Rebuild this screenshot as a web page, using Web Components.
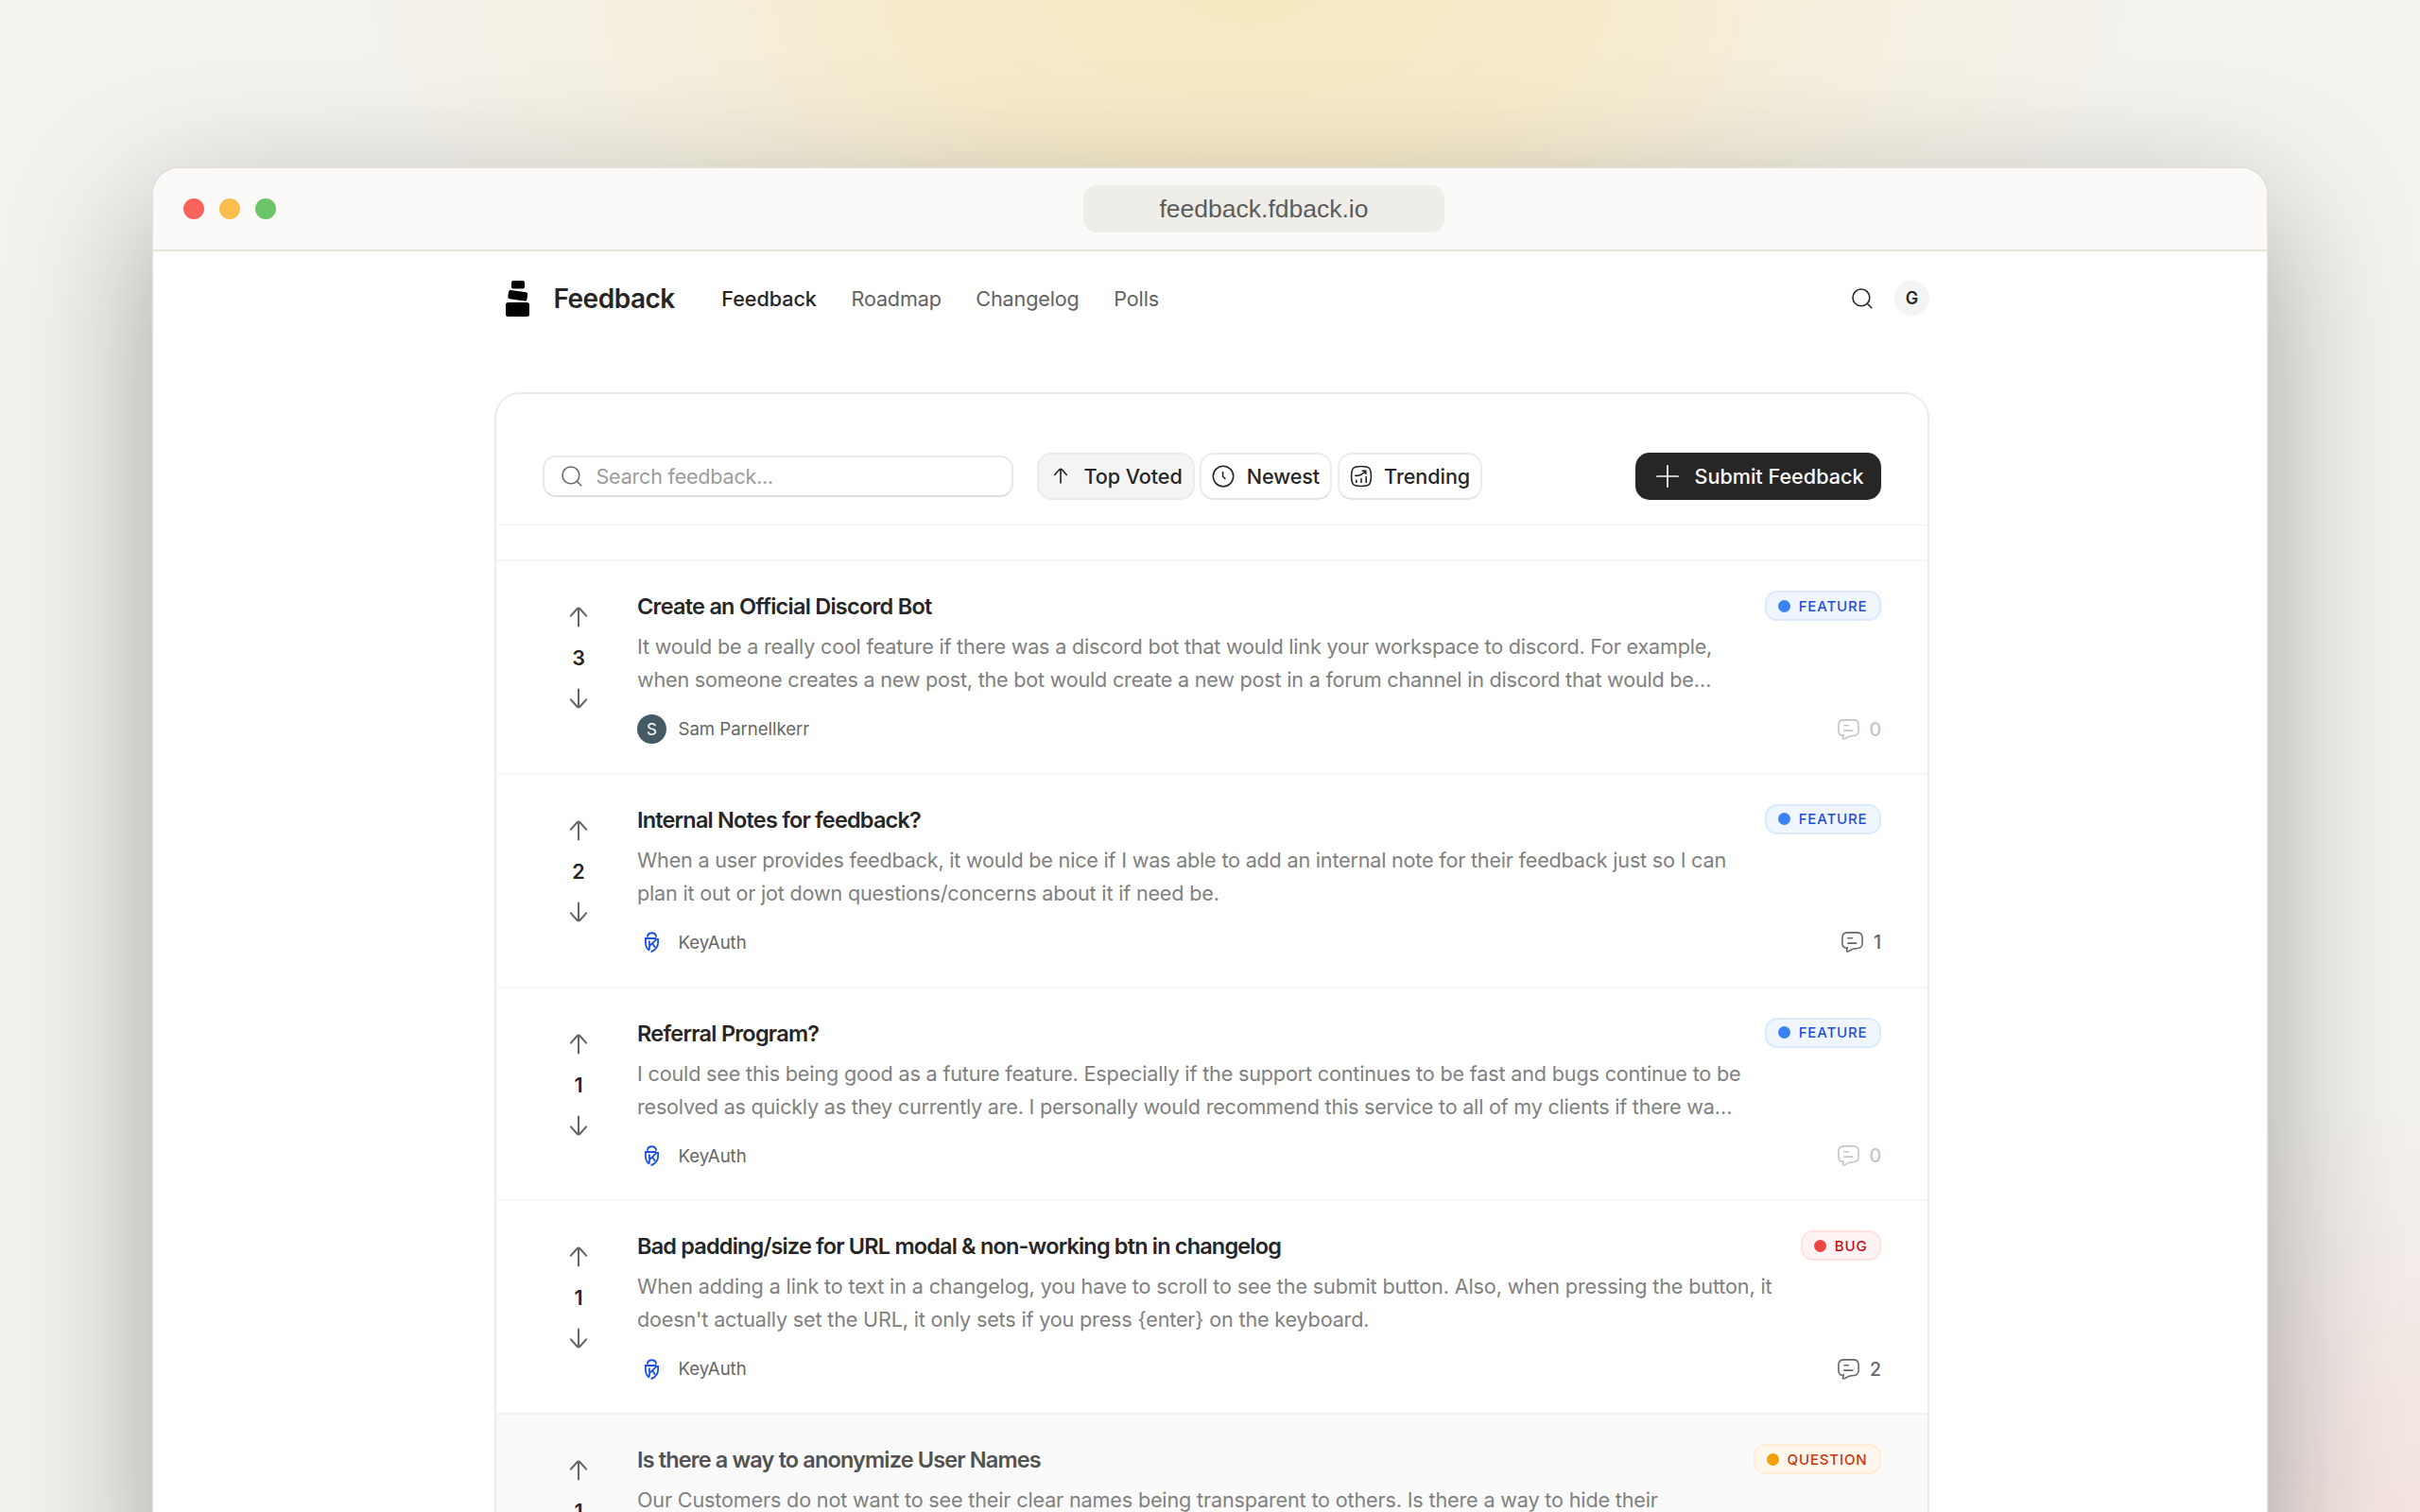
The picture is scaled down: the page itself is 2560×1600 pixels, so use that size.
<!DOCTYPE html>
<html lang="en">
<head>
<meta charset="utf-8">
<title>Feedback</title>
<style>
  html, body {
    margin: 0;
    height: 100%;
    overflow: hidden;
  }
  body {
    box-sizing: border-box;
    padding: 178px 162px 0 162px;
    font-family: Inter, "Liberation Sans", sans-serif;
    font-size: 21.6px;
    color: #262626;
    background:
      radial-gradient(ellipse 980px 580px at 1320px -20px, #f7e9c1 0%, rgba(247, 233, 193, 0.78) 35%, rgba(247, 233, 193, 0.25) 72%, rgba(247, 233, 193, 0) 100%),
      radial-gradient(ellipse 440px 440px at 2540px 1600px, rgba(244, 224, 221, 0.75) 0%, rgba(244, 224, 221, 0) 100%),
      #f3f2ee;
  }
</style>
</head>
<body>
<browser-window url="feedback.fdback.io">
  <site-nav>
    <nav-link active>Feedback</nav-link>
    <nav-link>Roadmap</nav-link>
    <nav-link>Changelog</nav-link>
    <nav-link>Polls</nav-link>
  </site-nav>
  <feedback-board>
    <sort-button slot="sort" icon="up" active>Top Voted</sort-button>
    <sort-button slot="sort" icon="clock">Newest</sort-button>
    <sort-button slot="sort" icon="trend">Trending</sort-button>

    <feedback-post votes="3" comments="0" tag="feature" author="Sam Parnellkerr">
      <span slot="title" style="letter-spacing: -0.75px">Create an Official Discord Bot</span>
      <span style="letter-spacing: -0.206px">It would be a really cool feature if there was a discord bot that would link your workspace to discord. For example,</span>
      <span style="letter-spacing: -0.217px">when someone creates a new post, the bot would create a new post in a forum channel in discord that would be…</span>
    </feedback-post>
    <feedback-post votes="2" comments="1" tag="feature" author="KeyAuth">
      <span slot="title" style="letter-spacing: -0.81px">Internal Notes for feedback?</span>
      <span style="letter-spacing: -0.204px">When a user provides feedback, it would be nice if I was able to add an internal note for their feedback just so I can</span>
      <span style="letter-spacing: -0.185px">plan it out or jot down questions/concerns about it if need be.</span>
    </feedback-post>
    <feedback-post votes="1" comments="0" tag="feature" author="KeyAuth">
      <span slot="title" style="letter-spacing: -0.75px">Referral Program?</span>
      <span style="letter-spacing: -0.168px">I could see this being good as a future feature. Especially if the support continues to be fast and bugs continue to be</span>
      <span style="letter-spacing: -0.222px">resolved as quickly as they currently are. I personally would recommend this service to all of my clients if there wa…</span>
    </feedback-post>
    <feedback-post votes="1" comments="2" tag="bug" author="KeyAuth">
      <span slot="title" style="letter-spacing: -0.83px">Bad padding/size for URL modal &amp; non-working btn in changelog</span>
      <span style="letter-spacing: -0.14px">When adding a link to text in a changelog, you have to scroll to see the submit button. Also, when pressing the button, it</span>
      <span style="letter-spacing: -0.17px">doesn't actually set the URL, it only sets if you press {enter} on the keyboard.</span>
    </feedback-post>
    <feedback-post votes="1" comments="1" tag="question" author="KeyAuth" hovered>
      <span slot="title" style="letter-spacing: -0.86px">Is there a way to anonymize User Names</span>
      <span style="letter-spacing: -0.16px">Our Customers do not want to see their clear names being transparent to others. Is there a way to hide their</span>
    </feedback-post>
  </feedback-board>
</browser-window>

<script>
const icons = {
  search: { size: [22, 22], width: 1.6, body: '<circle cx="9.9" cy="9.9" r="8.9"/><path d="M16.2 16.2l4.6 4.6"/>' },
  up: { size: [18, 22], width: 2.1, body: '<path d="M9 20.5V1.8M.9 9.6l6.600-7.300q1.500-1.300 3 0l6.600 7.300"/>' },
  down: { size: [18, 22], width: 2.1, body: '<path d="M9 1.500v18.700M.9 12.400l6.600 7.300q1.500 1.300 3 0l6.600-7.300"/>' },
  clock: { size: [24, 24], width: 1.6, body: '<circle cx="12" cy="12" r="10.7"/><path d="M11.600 7.500v4.300q0 .4.300.7l2 1.900"/>' },
  trend: { size: [24, 24], width: 1.6, body: '<path d="M12 1.500c8.700 0 10.400 1.700 10.400 10.500S20.700 22.500 12 22.500 1.600 20.800 1.600 12 3.300 1.500 12 1.500zM6.800 18.400v-2.200M12 18.400v-3.800M17.200 18.400v-5.800M5.800 11.400c4 .2 7.600-1.400 10.700-5M13.200 6.200l3.400-.1.400 3.200"/>' },
  plus: { size: [24, 24], width: 1.7, body: '<path d="M12 .9v22.200M.9 12h22.200"/>' },
  comment: { size: [23, 22], width: 1.6, body: '<path d="M5.400 17.500C2 17.200 1 15.500.9 12V6.500C1 2.600 2.300 1 6 .9h11c3.700.1 5 1.700 5.100 5.600v5.300c-.1 4.200-1.400 5.400-5.100 5.700-4.200.1-6.600.8-9.400 3.100-1.400.8-2.600.2-1.800-1.400.2-.5.300-1 .3-2.700M6.800 6.800h4.700M6.800 12.100h9"/>' },
};

function icon(name, scale = 1) {
  const { size: [w, h], width, body } = icons[name];
  return `<svg width="${w * scale}" height="${h * scale}" viewBox="0 0 ${w} ${h}" fill="none" stroke="currentColor" stroke-width="${width}" stroke-linecap="round" stroke-linejoin="round">${body}</svg>`;
}

class BrowserWindow extends HTMLElement {
  constructor() {
    super();
    this.attachShadow({ mode: 'open' }).innerHTML = `
      <style>
        :host {
          display: block;
          height: 1500px;
          border-radius: 28px;
          background: #fff;
          box-shadow: 0 0 0 1.5px rgba(226, 223, 216, 0.9), 0 50px 150px rgba(0, 0, 0, 0.34);
        }
        header {
          box-sizing: border-box;
          display: flex;
          align-items: center;
          height: 88px;
          padding-left: 32px;
          border-bottom: 2px solid #e7e5dc;
          border-radius: 28px 28px 0 0;
          background: #fbfaf8;
        }
        .dots {
          display: flex;
          gap: 16px;
        }
        .dots i {
          width: 22px;
          height: 22px;
          border-radius: 50%;
          background: #f9635c;
        }
        .dots i:nth-child(2) { background: #fabd4e; }
        .dots i:nth-child(3) { background: #6bc466; }
        .url {
          width: 382px;
          height: 50px;
          margin-left: 854px;
          border-radius: 14px;
          background: #eeede8;
          color: #5c5c5c;
          font: 26.5px/50px "Liberation Sans", Arial, sans-serif;
          text-align: center;
        }
        main {
          display: flex;
          flex-direction: column;
          width: 1518px;
          padding-left: 361px;
        }
      </style>
      <header>
        <div class="dots"><i></i><i></i><i></i></div>
        <div class="url"></div>
      </header>
      <main><slot></slot></main>
    `;
    this.shadowRoot.querySelector('.url').textContent = this.getAttribute('url');
  }
}

class SiteNav extends HTMLElement {
  constructor() {
    super();
    this.attachShadow({ mode: 'open' }).innerHTML = `
      <style>
        :host {
          display: flex;
          align-items: center;
          height: 99px;
          padding-left: 12px;
        }
        .brand {
          display: flex;
          align-items: center;
          font-size: 28px;
          font-weight: 600;
          letter-spacing: -0.5px;
        }
        .logo {
          margin-right: 25.5px;
        }
        nav {
          display: flex;
          gap: 36.6px;
          margin-left: 49.5px;
        }
        .search {
          display: flex;
          margin-left: auto;
          margin-right: 23.5px;
        }
        .avatar {
          width: 37px;
          height: 37px;
          border-radius: 50%;
          background: #f4f4f4;
          font-size: 18px;
          font-weight: 600;
          line-height: 37px;
          text-align: center;
        }
      </style>
      <div class="brand">
        <svg class="logo" width="25" height="38" viewBox="0 0 25 38">
          <rect x="6" y="0" width="14" height="8.500" rx="2"/>
          <rect x="2.600" y="11" width="20.300" height="9.500" rx="2" transform="rotate(8 12.500 15.500)"/>
          <rect x="0" y="23" width="25" height="15" rx="2.500"/>
        </svg>
        <span>Feedback</span>
      </div>
      <nav><slot></slot></nav>
      <div class="search">${icon('search')}</div>
      <div class="avatar">G</div>
    `;
  }
}

class NavLink extends HTMLElement {
  constructor() {
    super();
    this.attachShadow({ mode: 'open' }).innerHTML = `
      <style>
        :host {
          display: block;
          color: #626262;
          letter-spacing: -0.15px;
        }
        :host([active]) {
          color: #262626;
          font-weight: 500;
          letter-spacing: -0.05px;
        }
      </style>
      <slot></slot>
    `;
  }
}

class SortButton extends HTMLElement {
  constructor() {
    super();
    this.attachShadow({ mode: 'open' }).innerHTML = `
      <style>
        :host {
          box-sizing: border-box;
          display: flex;
          align-items: center;
          height: 50px;
          padding: 0 11px 0 11px;
          border: 2px solid #ececec;
          border-bottom-color: #e4e4e4;
          border-radius: 15px;
          font-weight: 500;
          letter-spacing: -0.08px;
          white-space: nowrap;
        }
        :host([active]) {
          background: #f4f4f4;
          border-color: #ebebeb;
        }
        svg {
          flex: none;
        }
        .icon {
          display: flex;
          justify-content: center;
          width: 24px;
          margin-right: 12.5px;
        }
      </style>
      <span class="icon">${icon(this.getAttribute('icon'), this.getAttribute('icon') === 'up' ? 0.78 : 1)}</span>
      <slot></slot>
    `;
  }
}

class TypeBadge extends HTMLElement {
  constructor() {
    super();
    this.attachShadow({ mode: 'open' }).innerHTML = `
      <style>
        :host {
          --dot: #3b82f6;
          box-sizing: border-box;
          display: flex;
          align-items: center;
          gap: 8.5px;
          height: 32px;
          padding: 0 12.5px 0 12px;
          border: 2px solid #dbeafe;
          border-radius: 13px;
          background: #eff6ff;
          color: #1d4ed8;
          font-size: 15px;
          font-weight: 500;
          letter-spacing: 0.85px;
          text-transform: uppercase;
        }
        :host([type="bug"]) {
          --dot: #ef4444;
          background: #fef2f2;
          border-color: #fee2e2;
          color: #c00d16;
        }
        :host([type="question"]) {
          --dot: #f59e0b;
          background: #fff7ed;
          border-color: #ffedd5;
          color: #c7360a;
        }
        i {
          width: 13px;
          height: 13px;
          border-radius: 50%;
          background: var(--dot);
        }
      </style>
      <i></i><span></span>
    `;
    this.shadowRoot.querySelector('span').textContent = this.getAttribute('type');
  }
}

class AuthorAvatar extends HTMLElement {
  constructor() {
    super();
    this.attachShadow({ mode: 'open' });
    const name = this.getAttribute('name');
    const keyAuth = `
      <svg width="15" height="22" viewBox="0 0 15 22" fill="none" stroke="#1a50e6" stroke-width="1.800">
        <path d="M2.800 5.600C3.200-.2 11.800-.2 12.200 5.600"/>
        <path d="M12 7H.9v4.500c0 4 1.700 6.600 4.200 8.200M6.600 20.400l.9.500c3.700-1.800 6.600-4.800 6.600-9.400V7"/>
        <path d="M4.900 9.500v4.500M13.400 7.200L5 15.200v3.600M8.200 12.600l2.800 4.200"/>
      </svg>
    `;
    this.shadowRoot.innerHTML = `
      <style>
        :host {
          display: flex;
          align-items: center;
          justify-content: center;
          width: 31px;
          height: 31px;
          border-radius: 50%;
        }
        :host([name^="Sam"]) {
          background: #455a64;
          color: #fff;
          font-size: 17px;
        }
      </style>
      ${name === 'KeyAuth' ? keyAuth : name[0]}
    `;
  }
}

class FeedbackPost extends HTMLElement {
  constructor() {
    super();
    const comments = this.getAttribute('comments');

    this.attachShadow({ mode: 'open' }).innerHTML = `
      <style>
        :host {
          box-sizing: border-box;
          display: grid;
          grid-template-columns: 76px 1fr;
          column-gap: 24px;
          height: 225.8px;
          padding: 30px 49px 0 49px;
          border-top: 2px solid #f6f6f6;
        }
        :host([hovered]) {
          background: #fafafa;
          border-color: #f2f2f2;
        }
        :host([hovered]) .title {
          color: #525252;
        }
        .votes {
          display: flex;
          flex-direction: column;
          align-items: center;
          padding-top: 18px;
          color: #666;
        }
        .votes b {
          margin: 18px 0;
          color: #262626;
          font-weight: 600;
          line-height: 28px;
        }
        .head, .foot {
          display: flex;
          justify-content: space-between;
        }
        .title {
          font-size: 23.5px;
          font-weight: 600;
          line-height: 36px;
          white-space: nowrap;
        }
        type-badge {
          margin-top: 1px;
        }
        .text {
          height: 70px;
          margin-top: 7px;
          color: #808080;
          line-height: 35px;
        }
        ::slotted(span:not([slot])) {
          display: block;
          width: max-content;
          white-space: nowrap;
        }
        .foot {
          align-items: center;
          margin-top: 19px;
          color: #666;
          font-size: 18.7px;
        }
        .author, .comments {
          display: flex;
          align-items: center;
          gap: 12.5px;
        }
        .author span {
          letter-spacing: -0.08px;
        }
        .comments {
          gap: 10.5px;
          font-size: 19.5px;
          font-weight: 500;
        }
        .comments.none {
          color: #c4c4c4;
        }
      </style>
      <div class="votes">${icon('up')}<b>${this.getAttribute('votes')}</b>${icon('down')}</div>
      <div>
        <div class="head">
          <div class="title"><slot name="title"></slot></div>
          <type-badge type="${this.getAttribute('tag')}"></type-badge>
        </div>
        <div class="text"><slot></slot></div>
        <div class="foot">
          <div class="author">
            <author-avatar name="${this.getAttribute('author')}"></author-avatar>
            <span>${this.getAttribute('author')}</span>
          </div>
          <div class="comments ${comments === '0' ? 'none' : ''}">${icon('comment')}${comments}</div>
        </div>
      </div>
    `;
  }
}

class FeedbackBoard extends HTMLElement {
  constructor() {
    super();
    this.attachShadow({ mode: 'open' }).innerHTML = `
      <style>
        :host {
          box-sizing: border-box;
          display: block;
          width: 1518px;
          height: 1300px;
          margin-top: 50px;
          border: 2px solid #ebebeb;
          border-radius: 27px;
        }
        .toolbar {
          box-sizing: border-box;
          display: flex;
          align-items: center;
          height: 139px;
          padding: 62px 49px 26px;
          border-bottom: 1px solid #f3f3f3;
        }
        .search {
          box-sizing: border-box;
          display: flex;
          align-items: center;
          gap: 14.5px;
          width: 498px;
          height: 44px;
          padding-left: 18px;
          border: 2px solid #e8e8e8;
          border-bottom-color: #dedede;
          border-radius: 14px;
          color: #6b6b6b;
        }
        .search span {
          color: #9c9c9c;
          letter-spacing: -0.24px;
        }
        .sorts {
          display: flex;
          gap: 5.5px;
          margin-left: 25px;
        }
        .submit {
          display: flex;
          align-items: center;
          gap: 16px;
          height: 50px;
          margin-left: auto;
          padding: 0 18.5px 0 22.5px;
          border-radius: 15px;
          background: #262626;
          color: #fafafa;
          font-weight: 500;
        }
        .posts {
          margin-top: 36px;
        }
      </style>
      <div class="toolbar">
        <div class="search">${icon('search')}<span>Search feedback...</span></div>
        <div class="sorts"><slot name="sort"></slot></div>
        <div class="submit">${icon('plus')}<span>Submit Feedback</span></div>
      </div>
      <div class="posts"><slot></slot></div>
    `;
  }
}

customElements.define('author-avatar', AuthorAvatar);
customElements.define('type-badge', TypeBadge);
customElements.define('nav-link', NavLink);
customElements.define('site-nav', SiteNav);
customElements.define('sort-button', SortButton);
customElements.define('feedback-post', FeedbackPost);
customElements.define('feedback-board', FeedbackBoard);
customElements.define('browser-window', BrowserWindow);
</script>
</body>
</html>
